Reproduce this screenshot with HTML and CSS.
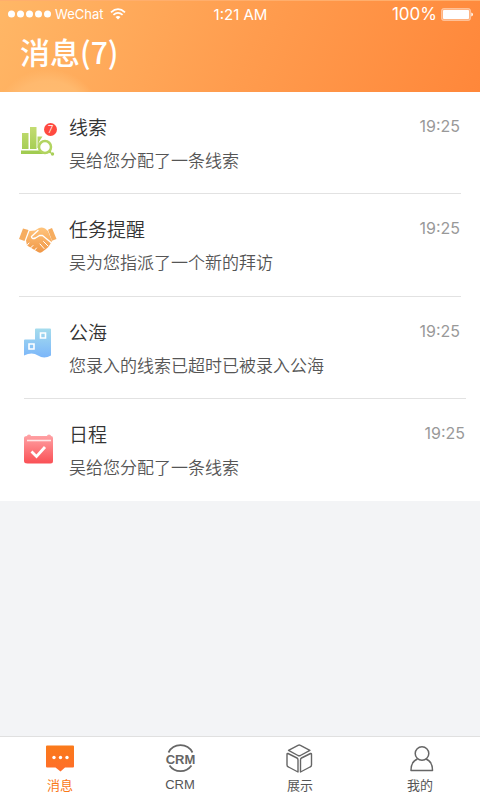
FILE: index.html
```html
<!DOCTYPE html>
<html lang="zh-CN">
<head>
<meta charset="utf-8">
<meta name="viewport" content="width=device-width, initial-scale=1">
<title>消息</title>
<link rel="stylesheet" href="styles.css">
</head>
<body>
<header class="header">
  <div class="status">
    <div class="carrier">
      <svg width="43" height="8" viewBox="0 0 43 8" fill="#fff" aria-hidden="true"><circle cx="3.500" cy="4" r="3.500"/><circle cx="12.500" cy="4" r="3.500"/><circle cx="21.500" cy="4" r="3.500"/><circle cx="30.500" cy="4" r="3.500"/><circle cx="39.500" cy="4" r="3.500"/></svg>
      <span>WeChat</span>
      <svg width="16" height="12" viewBox="0 0 16 12" fill="none" stroke="#fff" stroke-width="1.800" aria-hidden="true"><path d="M1 4.300Q8-2 15 4.300M3.400 6.900Q8 2.900 12.600 6.900"/><path d="M5.500 9Q8 6.800 10.500 9L8 11.600z" fill="#fff" stroke="none"/></svg>
    </div>
    <span class="clock">1:21 AM</span>
    <div class="battery">
      <span>100%</span>
      <svg width="32" height="13" viewBox="0 0 32 13" aria-hidden="true"><rect x=".5" y=".5" width="29" height="12" rx="2" fill="#fff" fill-opacity=".35" stroke="#fff" stroke-opacity=".35"/><rect x="2" y="2" width="26" height="9" rx="1" fill="#fff"/><path d="M30.300 4.500q1.700.4 1.700 2t-1.700 2z" fill="#fff"/></svg>
    </div>
  </div>
  <h1 class="title">消息(7)</h1>
</header>

<main class="main">
  <ul class="list">
    <li class="row">
      <div class="icon">
        <svg width="38" height="38" viewBox="0 0 38 38" aria-hidden="true">
          <defs><linearGradient id="green" x1="0" y1="0" x2="0" y2="1"><stop offset="0" stop-color="#c4dc72"/><stop offset="1" stop-color="#9fcb4f"/></linearGradient></defs>
          <path d="M3 14h6.500v16H3zM11 8h6.500v22H11zM18.500 17.500h5l-2 3a8 8 0 0 0-1 8.500h-2zM2 31.500h18q3 3 8 3.500H2z" fill="url(#green)"/>
          <circle cx="26" cy="28" r="6" fill="#fff" stroke="#b2d460" stroke-width="2.500"/>
          <path d="M30.500 32.500l1.500 1.500" stroke="#a9cf58" stroke-width="2"/><circle cx="33.500" cy="35" r="1.700" fill="#a9cf58"/>
        </svg>
        <span class="badge">7</span>
      </div>
      <div class="body"><h2 class="name">线索</h2><p class="text">吴给您分配了一条线索</p></div>
      <time class="time">19:25</time>
    </li>
    <li class="row row-tall">
      <div class="icon">
        <svg width="38" height="38" viewBox="0 0 38 38" aria-hidden="true">
          <defs><linearGradient id="amber" x1="0" y1="0" x2="0" y2="1"><stop offset="0" stop-color="#ffc47c"/><stop offset="1" stop-color="#f09746"/></linearGradient></defs>
          <path d="M4 7.500l5.500 1.500-4 11-5.500-2zM33 7l4.500 11-4.500 1.700-4-11z" fill="#f6ad60"/>
          <path d="M10.500 10l5.500-.5 4-2.500q3-1 6 .5l3 2.500 4 10-2 3.500q-1.500 3-4 4.500l-4 3q-2 1.600-4 0L8 24.500l-1-5z" fill="url(#amber)"/>
          <path d="M19 9.500l-6.500 6q0 3 4 1.500l4-2.500h3l8.500 7" fill="none" stroke="#fff" stroke-width="1.400" stroke-linecap="round" stroke-linejoin="round"/>
          <path d="M7 25.500l3-3.500M10 28.500l4-4M14 31l3.500-4M24.500 20.500l4.500 4.500M21 23l4 4.500" stroke="#fff" stroke-linecap="round"/>
        </svg>
      </div>
      <div class="body"><h2 class="name">任务提醒</h2><p class="text">吴为您指派了一个新的拜访</p></div>
      <time class="time">19:25</time>
    </li>
    <li class="row row-inset">
      <div class="icon">
        <svg width="38" height="38" viewBox="0 0 38 38" aria-hidden="true">
          <defs><linearGradient id="blue" x1="0" y1="0" x2="0" y2="1"><stop offset="0" stop-color="#a5dced"/><stop offset="1" stop-color="#7bb6fa"/></linearGradient></defs>
          <path d="M5 16.500q0-1 1-1h10V5.500q0-1 1-1h14q1 0 1 1v26q-7 4-13 0t-14 0z" fill="url(#blue)"/>
          <path d="M21.500 9h5v5h-5zM10 20h5v5h-5z" fill="none" stroke="#fff" stroke-width="1.600"/>
        </svg>
      </div>
      <div class="body"><h2 class="name">公海</h2><p class="text">您录入的线索已超时已被录入公海</p></div>
      <time class="time time-inner">19:25</time>
    </li>
    <li class="row row-inset row-last">
      <div class="icon">
        <svg width="38" height="38" viewBox="0 0 38 38" aria-hidden="true">
          <defs><linearGradient id="red" x1="0" y1="0" x2="0" y2="1"><stop offset="0" stop-color="#ffa4a7"/><stop offset="1" stop-color="#fa5055"/></linearGradient></defs>
          <path d="M8 10q0-1.500 2-1.500t2 1.500h16q0-1.500 2-1.500t2 1.500q2 0 2 2v23q0 2.500-2.500 2.500h-23Q5 37.500 5 35V12q0-2 3-2z" fill="url(#red)"/>
          <path d="M8 14.500h24" stroke="#fff" stroke-opacity=".75" stroke-width="1.600"/>
          <path d="M12.500 25.500l5 5 8.500-9.500" fill="none" stroke="#fff" stroke-width="2.800"/>
        </svg>
      </div>
      <div class="body"><h2 class="name">日程</h2><p class="text">吴给您分配了一条线索</p></div>
      <time class="time">19:25</time>
    </li>
  </ul>
</main>

<nav class="tabs">
  <a class="tab tab-active" href="#messages">
    <svg width="30" height="30" viewBox="0 0 30 30" aria-hidden="true"><defs><linearGradient id="tab" x1="0" y1="0" x2="0" y2="1"><stop offset="0" stop-color="#fa7a1a"/><stop offset="1" stop-color="#ff6d2b"/></linearGradient></defs><path d="M2 2.500h26q1 0 1 1v20q0 1-1 1h-8L15.500 28.500l-5-4H2q-1 0-1-1v-20q0-1 1-1z" fill="url(#tab)"/><g fill="#fff"><circle cx="9" cy="14.500" r="1.700"/><circle cx="15.500" cy="14.500" r="1.700"/><circle cx="22" cy="14.500" r="1.700"/></g></svg>
    <span>消息</span>
  </a>
  <a class="tab" href="#crm">
    <svg width="32" height="30" viewBox="0 0 32 30" aria-hidden="true"><path d="M4.500 9.500a13.500 13.500 0 0 1 24 0M5.500 22.500a13.500 13.500 0 0 0 22 0" fill="none" stroke="#666" stroke-width="1.700"/><text class="crm" x="16.500" y="20.500" text-anchor="middle">CRM</text></svg>
    <span class="latin">CRM</span>
  </a>
  <a class="tab" href="#showcase">
    <svg width="30" height="30" viewBox="0 0 30 30" fill="none" stroke="#666" stroke-width="1.400" stroke-linejoin="round" aria-hidden="true"><path d="M3.500 7.300l9.500-5q1.200-.5 2.400 0l9.500 5-9.500 5.200q-1.200.5-2.400 0zM3 10.500l9 4.500q1 .5 1 2v12l-9.500-5Q2 23.500 2 22V11.500q0-1.500 1-1zM25.500 10.500l-9 4.500q-1 .5-1 2v12l9.500-5q1.500-.5 1.500-2V11.500q0-1.500-1-1z"/></svg>
    <span>展示</span>
  </a>
  <a class="tab" href="#mine">
    <svg width="30" height="30" viewBox="0 0 30 30" fill="none" stroke="#666" stroke-width="1.500" stroke-linejoin="round" aria-hidden="true"><circle cx="17" cy="10.500" r="6.800"/><path d="M12.500 16Q6 18.500 6 27.500h21.500Q27.500 18.500 21 16"/></svg>
    <span>我的</span>
  </a>
</nav>
</body>
</html>
```
FILE: styles.css
```css
* {
  box-sizing: border-box;
}

body {
  display: flex;
  flex-direction: column;
  min-height: 100vh;
  margin: 0;
  background: #f3f4f6;
  color: #333;
  font-family: "Noto Sans CJK SC", sans-serif;
}

h1,
h2,
p,
ul {
  margin: 0;
  padding: 0;
  font-weight: 400;
}

svg {
  display: block;
}

.header {
  padding: 3px 7px 18px 8px;
  border-top: 1px solid #ffae6c;
  background:
    radial-gradient(circle at 48px 124px, #ffbf77 0, #ffb96e 44px, transparent 56px),
    linear-gradient(115deg, #ffb766 0%, #ff9c4e 52%, #ff873a 100%);
  color: #fff;
}

.status {
  display: grid;
  grid-template-columns: 1fr auto 1fr;
  align-items: center;
  height: 19px;
  font-family: Inter, sans-serif;
  font-size: 15px;
}

.carrier,
.battery {
  display: flex;
  align-items: center;
  gap: 4px;
}

.carrier {
  font-size: 13px;
}

.carrier svg:last-child {
  margin-left: 3px;
}

.battery {
  justify-content: flex-end;
  font-size: 17px;
}

.title {
  padding: 5px 12px 0;
  font-size: 30px;
  font-weight: 500;
  line-height: 46px;
}

.main {
  flex: 1;
}

.list {
  background: #fff;
  list-style: none;
}

.row {
  display: grid;
  grid-template-columns: 50px 1fr auto;
  margin: 0 19px;
  padding: 21px 0 20px;
  border-bottom: 1px solid #e2e2e2;
}

.row-tall {
  padding-bottom: 21px;
}

.row-inset {
  grid-template-columns: 45px 1fr auto;
  margin: 0 14px 0 24px;
}

.row-inset .icon {
  margin-left: -5px;
}

.row-last {
  padding-bottom: 21px;
  border-bottom: 0;
}

.icon {
  position: relative;
  padding-top: 6px;
}

.badge {
  position: absolute;
  top: 10px;
  left: 25px;
  width: 13px;
  height: 13px;
  border-radius: 50%;
  background: #ff4a40;
  color: #fff;
  font-family: Inter, sans-serif;
  font-size: 10px;
  font-weight: 300;
  line-height: 13px;
  text-align: center;
}

.name {
  font-size: 19px;
  font-weight: 350;
  line-height: 28px;
}

.text {
  padding-top: 5px;
  color: #555;
  font-size: 17px;
  font-weight: 350;
  line-height: 27px;
}

.time {
  padding-right: 1px;
  color: #999;
  font-family: Inter, sans-serif;
  font-size: 16px;
  line-height: 26px;
}

.time-inner {
  padding-right: 6px;
}

.tabs {
  display: grid;
  grid-template-columns: repeat(4, 1fr);
  padding: 6px 0 5px;
  border-top: 1px solid #e0e0e0;
  background: #fff;
}

.tab {
  display: flex;
  flex-direction: column;
  align-items: center;
  gap: 2px;
  color: #555;
  font-size: 13px;
  line-height: 20px;
  text-decoration: none;
}

.tab-active {
  color: #fa7819;
}

.latin {
  font-family: "Liberation Sans", sans-serif;
}

.crm {
  fill: #666;
  font-family: "Liberation Sans", sans-serif;
  font-size: 13px;
  font-weight: 700;
}
```
